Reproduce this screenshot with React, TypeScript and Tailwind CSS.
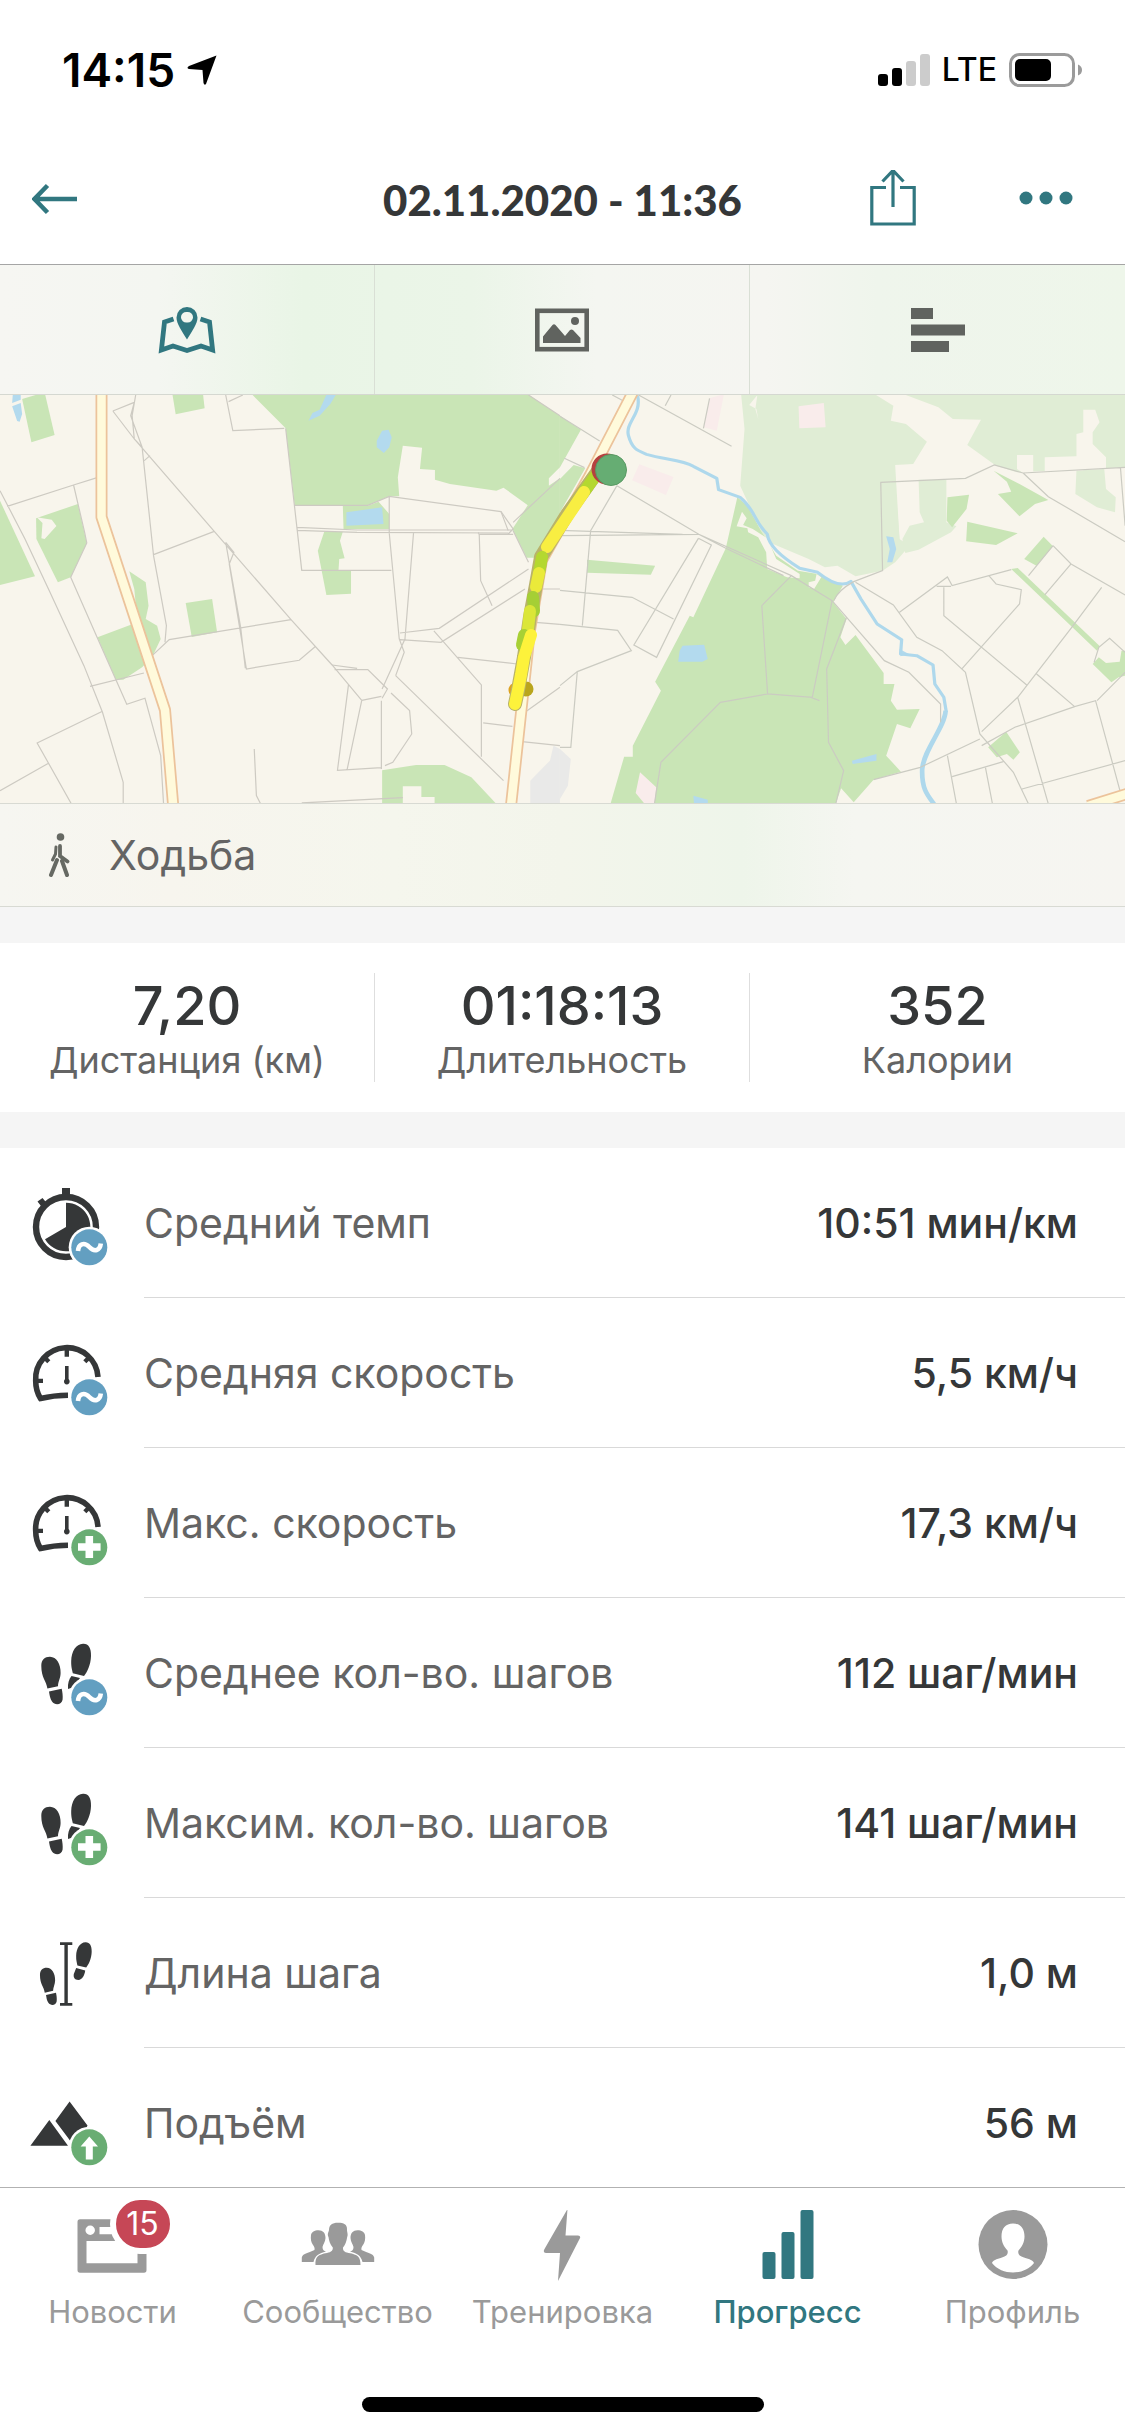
import type { ReactNode } from "react";

type BadgeKind = "average" | "max" | "ascent";

function Badge({ kind }: { kind: BadgeKind }) {
    return (
        <g>
            <circle cx="59.3" cy="74.3" r="20.6" fill="#fff" />
            <circle cx="59.3" cy="74.3" r="18" fill={kind === "average" ? "#639fc1" : "#69ad73"} />
            {kind === "average" && (
                <path
                    d="M48 78C48.5 71 54 68.5 59.3 74C64.5 79.5 70 77.5 70.8 70.5"
                    fill="none"
                    stroke="#fff"
                    strokeWidth="4.6"
                />
            )}
            {kind === "max" && <path d="M55.5 63h7.6v7.2h7.5v7.6h-7.5v7.2h-7.6v-7.2H48v-7.6h7.5z" fill="#fff" />}
            {kind === "ascent" && <path d="M59.3 63.5L68 73.6H62.8V86.6H55.8V73.6H50.6z" fill="#fff" />}
        </g>
    );
}

function RowIcon({ children }: { children: ReactNode }) {
    return (
        <svg viewBox="0 0 84 100" className="h-[100px] w-[84px] shrink-0" fill="#353738" aria-hidden="true">
            {children}
        </svg>
    );
}

function Stopwatch() {
    return (
        <>
            <circle cx="36" cy="54" r="30" fill="none" stroke="#353738" strokeWidth="6.4" />
            <path d="M32 15h8v8h-8zM7.5 28.5l5-3.5 5 6-5 4z" />
            <path d="M36 54V29.7A24.3 24.3 0 1 1 15 66.2z" />
        </>
    );
}

function Gauge() {
    return (
        <g fill="none" stroke="#353738">
            <path d="M38 72.2C28 72.3 19 73.4 10.5 75.4C6.8 69.5 5.7 63.5 5.7 57.7A31.2 31.2 0 0 1 68 54" strokeWidth="5.6" />
            <path d="M8 57.9H13M36.8 26V33.8M14.5 34.5L18.8 38.8M59.2 34.5L54.8 38.8" strokeWidth="4.4" />
            <path d="M36.8 43V58" strokeWidth="3.6" />
            <circle cx="36.8" cy="58.6" r="2.8" fill="#353738" stroke="none" />
        </g>
    );
}

const LEFT_SHOE =
    "M11.3 43C11.3 36.5 15 33.7 20 33.8C26.5 34 30.8 41 30.6 50C30.5 55.5 28.2 58 28 63.2L17.4 65.6C16.5 58 11.3 55 11.3 43ZM19 68.4L31.7 65.8C32.4 69 33 73 32.6 76.5C32 81.8 25 82.8 22 78.5C20 75.5 19.6 72 19 68.4Z";
const RIGHT_SOLE =
    "M53 20.7C58.5 20.4 61.2 25 61 33C60.8 42 57 49.5 54 53L42.8 50.3C42.2 47 41 44 41.2 38C41.5 28 46 21.2 53 20.7Z";

function Steps() {
    return (
        <>
            <path d={LEFT_SHOE} />
            <path d={RIGHT_SOLE} />
            <path d="M41.5 53L50 55L44 64L38 66C37.6 60.5 39 56 41.5 53Z" />
        </>
    );
}

function StepLength() {
    return (
        <>
            <path d={LEFT_SHOE} transform="translate(1.1 18.2) scale(.785)" />
            <path d={RIGHT_SOLE} transform="translate(13.8 2.9) scale(.785)" />
            <path d="M46.2 45L55.2 47.6C54.6 52.5 52 57 48.4 57C44.5 57 43.2 54 43.8 51Z" />
            <path d="M30 19.3H42.3V22H37.8V80H42.3V82.7H30V80H34.4V22H30Z" />
        </>
    );
}

function Mountains() {
    return <path d="M.4 72.8L19.3 47L38 72.8ZM39.6 28.4L57.5 52.4L48 72L43 71.5L25.4 48Z" />;
}

const metrics: { label: string; value: string; icon: ReactNode; badge?: BadgeKind }[] = [
    { label: "Средний темп", value: "10:51 мин/км", icon: <Stopwatch />, badge: "average" },
    { label: "Средняя скорость", value: "5,5 км/ч", icon: <Gauge />, badge: "average" },
    { label: "Макс. скорость", value: "17,3 км/ч", icon: <Gauge />, badge: "max" },
    { label: "Среднее кол-во. шагов", value: "112 шаг/мин", icon: <Steps />, badge: "average" },
    { label: "Максим. кол-во. шагов", value: "141 шаг/мин", icon: <Steps />, badge: "max" },
    { label: "Длина шага", value: "1,0 м", icon: <StepLength /> },
    { label: "Подъём", value: "56 м", icon: <Mountains />, badge: "ascent" },
];

const summary = [
    { value: "7,20", label: "Дистанция (км)" },
    { value: "01:18:13", label: "Длительность" },
    { value: "352", label: "Калории" },
];

function StatusBar() {
    return (
        <div className="flex h-[136px] items-center justify-between pt-1 pl-[62px] pr-[42px] text-black">
            <div className="flex items-center gap-3">
                <span className="text-[46px] leading-[52px] font-semibold">14:15</span>
                <svg viewBox="0 0 30 30" className="h-[30px] w-[30px]" aria-hidden="true">
                    <path d="M29.5 .5L19 29Q17.5 31 16.5 28L15.5 15L2 14Q-1 13 2 11Z" />
                </svg>
            </div>
            <div className="flex items-center gap-3">
                <svg viewBox="0 0 52 32" className="h-8 w-[52px]" aria-hidden="true">
                    <rect x="0" y="20" width="10" height="12" rx="3" />
                    <rect x="14" y="14" width="10" height="18" rx="3" />
                    <rect x="28" y="7" width="10" height="25" rx="3" fill="#ccc" />
                    <rect x="42" y="0" width="10" height="32" rx="3" fill="#ccc" />
                </svg>
                <span className="text-[32px] leading-10 font-medium">LTE</span>
                <svg viewBox="0 0 74 34" className="h-[34px] w-[74px]" aria-hidden="true">
                    <rect x="1.5" y="1.5" width="63" height="31" rx="9" fill="none" stroke="#9b9b9b" strokeWidth="3" />
                    <rect x="6" y="6" width="36" height="22" rx="5" />
                    <path d="M69 11.5Q73 13 73 17T69 22.5Z" fill="#9b9b9b" />
                </svg>
            </div>
        </div>
    );
}

function Header() {
    return (
        <header className="grid h-[129px] grid-cols-[1fr_auto_1fr] items-center border-b border-[#a5a5a5] px-8 text-[#317780]">
            <button type="button" aria-label="Назад" className="h-12 w-12 justify-self-start">
                <svg viewBox="0 0 48 48" className="h-12 w-12" fill="none" stroke="currentColor" strokeWidth="4.5">
                    <path d="M45 23H3M15.5 9.5L2.5 23L15.5 36.5" />
                </svg>
            </button>
            <h1 className="font-['Lato','Inter',sans-serif] text-[42px] leading-[52px] font-black text-[#353738]">
                02.11.2020 - 11:36
            </h1>
            <div className="flex items-center justify-end gap-[102px] pr-5">
                <button type="button" aria-label="Поделиться" className="h-[60px] w-12">
                    <svg viewBox="0 0 48 60" className="h-[60px] w-12" fill="none" stroke="currentColor" strokeWidth="3.2">
                        <path d="M17 17.5H2.8V54H45.2V17.5H31M24 37V1M13.5 11.5L24 .5L34.5 11.5" />
                    </svg>
                </button>
                <button type="button" aria-label="Ещё" className="h-12 w-[54px]">
                    <svg viewBox="0 0 54 48" className="h-12 w-[54px]" fill="currentColor">
                        <circle cx="7" cy="22" r="6.5" />
                        <circle cx="27" cy="22" r="6.5" />
                        <circle cx="47" cy="22" r="6.5" />
                    </svg>
                </button>
            </div>
        </header>
    );
}

function ViewSwitch() {
    return (
        <div className="grid h-[130px] shrink-0 grid-cols-3 divide-x divide-[#d9dfd5] border-b border-[#d5d8d1] bg-[linear-gradient(90deg,#f6f6f2_0%,#f4f6f1_14%,#e9f5e6_27%,#ebf5e8_42%,#f4f6f1_53%,#f5f5f1_68%,#eff5ec_78%,#eef6ea_100%)]">
            <button type="button" aria-label="Карта" className="flex items-center justify-center">
                <svg viewBox="0 0 60 50" className="h-[50px] w-[60px]" fill="none" stroke="#317780" strokeWidth="4.8">
                    <path d="M16.5 14L7.5 17L4.4 45L16 41L30 45.5L44 41L55.6 45L52.5 17L43.5 14" />
                    <path
                        d="M30 34.5C25 26 19.5 19 19.5 12.5A10.5 10.5 0 0 1 40.5 12.5C40.5 19 35 26 30 34.5ZM30 17.5A5.3 5.3 0 1 0 30 7A5.3 5.3 0 1 0 30 17.5Z"
                        fill="#317780"
                        fillRule="evenodd"
                        stroke="none"
                    />
                </svg>
            </button>
            <button type="button" aria-label="Фото" className="flex items-center justify-center">
                <svg viewBox="0 0 54 44" className="h-11 w-[54px]" fill="#60635f">
                    <rect x="2.3" y="2.8" width="49.4" height="38.4" fill="none" stroke="#60635f" strokeWidth="4.6" />
                    <path d="M8 35V28.5L17.5 17Q19 15.5 20.5 17L30 28L35 22Q36.5 20.8 38 22L45.5 30V35Z" />
                    <circle cx="40" cy="13" r="4" />
                </svg>
            </button>
            <button type="button" aria-label="Статистика" className="flex items-center justify-center">
                <svg viewBox="0 0 54 44" className="h-11 w-[54px]" fill="#60635f">
                    <path d="M0 0H22V11H0ZM0 16.5H54V27.5H0ZM0 33H38V44H0Z" />
                </svg>
            </button>
        </div>
    );
}

function RouteMap() {
    return (
        <svg
            viewBox="0 0 1125 408"
            preserveAspectRatio="xMidYMid slice"
            className="h-[408px] w-full shrink-0 bg-[#f8f5ec]"
            role="img"
            aria-label="Маршрут тренировки"
        >
            {/* west sheet */}
            <g transform="scale(.3571 .3333) translate(0 -18)">
                <g fill="#c9e5b6">
                    <path d="M62 30L125 10L153 138L88 160Z" />
                    <path d="M482 10H568L573 58L492 76Z" />
                    <path d="M700 10H1470L1568 80V270L1480 350L1410 296L1390 305L1260 285L1218 272V243L1176 240L1182 176L1128 170L1114 265L1118 322L1090 322L1030 349H825L800 118Z" />
                    <path d="M0 335L98 562L0 588Z" />
                    <path d="M101 388L218 345L243 462L198 565L162 580L102 450Z" />
                    <path d="M362 547L408 580L416 650L408 690L440 710L450 750L428 800L398 835L345 872L325 873L273 745L385 700L376 600Z" />
                    <path d="M520 642L594 630L608 730L537 744Z" />
                    <path d="M960 350H1030L1060 338L1090 375V420H962ZM908 428H960L952 455L965 508L950 510L948 543H983V614L914 618L890 485Z" />
                    <path d="M1568 268L1480 345L1435 420L1475 506H1500L1568 380Z" />
                    <path d="M1070 1144L1165 1128H1245L1320 1165L1390 1245H1070Z" />
                </g>
                <path
                    d="M103 385L145 392L158 411L125 450L116 448L119 402ZM1070 333L1090 325V375ZM1568 235L1537 268V290L1568 268ZM1128 1192H1180V1224H1217V1245H1128Z"
                    fill="#f8f5ec"
                />
                <path
                    d="M36 15H58V32L34 42ZM34 52L58 42L62 75L55 98L48 96ZM915 15H942L925 45L895 80L864 95L875 72L895 62ZM1070 125L1088 122L1097 145L1090 175L1075 192L1055 175V155ZM970 370L1070 355L1074 405L970 410Z"
                    fill="#b3daee"
                />
                <path d="M1550 1070L1568 1080V1245H1485V1175L1540 1115Z" fill="#e9e9e8" />
                <g fill="none" stroke="#cdcac2" strokeWidth="1.2">
                    <path
                        vectorEffect="non-scaling-stroke"
                        d="M0 305L70 450L140 610L235 830L287 970L345 1180V1245M20 352L206 288L272 266M206 288L237 430L243 462L198 565L270 740L355 946L406 928L450 1100L458 1245M252 892L403 852M287 967L104 1062L200 1245M0 1205L137 1122"
                    />
                    <path
                        vectorEffect="non-scaling-stroke"
                        d="M380 18L370 80L376 150L398 175L402 215L430 500L466 710L462 760M430 497L600 427M316 66L376 40L366 80L398 175M316 66L376 150L600 427L815 692L930 828L1013 934M404 215L420 200M632 18L652 125L796 118M640 38L680 18M632 460L655 490L642 525L690 840L838 814L884 772M632 460L674 716L687 838M420 806L474 752L815 692"
                    />
                    <path
                        vectorEffect="non-scaling-stroke"
                        d="M800 118L845 544H1096M825 349H1030L1090 322L1403 368L1437 420L1423 435M832 415L1000 423H1438M832 424L1000 430L1423 432M1090 322V432L1118 750L1132 790L1108 860M1158 432L1134 750L1070 900M1340 436V430M1437 436H1342L1346 575L1378 650M1480 540L1230 718L1120 732M1470 600L1235 760L1120 752M1215 726L1348 888V1103M1282 805L1448 825"
                    />
                    <path
                        vectorEffect="non-scaling-stroke"
                        d="M1108 860L1410 1175M1068 935V1140M930 828L1000 838M937 842H1030L1085 900L1070 928M1013 934L1068 922M1095 912L1147 965L1153 1035L1100 1120L1078 1130M1013 934L972 1142M976 886L945 1144L1068 1136M1353 1002L1435 1012M1462 1058L1568 1070M1470 970L1568 895M712 1080L718 1220L730 1245M845 1242L1128 1226M1505 600H1568M1500 700L1568 706M1480 18L1568 80M1437 400L1568 268M1437 425L1480 520M1403 368L1423 425"
                    />
                </g>
            </g>

            {/* east sheet */}
            <g transform="translate(560 0) scale(.3604 .3333) translate(0 -18)">
                <g fill="#e0edd5">
                    <path d="M502 10H865L925 50L918 95L960 105L1018 158L980 225L930 228L942 450L970 470L930 520L895 545L820 562L770 530L735 535L690 510L570 455L500 290L512 120Z" />
                    <path d="M940 10H1568V235L1268 250L1210 230L1130 168L1168 92L1090 90L1050 55Z" />
                    <path d="M995 272H1072V400L1100 412L1085 430L995 482L958 492L950 450L970 410L1010 400L998 370ZM1433 245L1510 238L1515 300L1542 325L1540 370L1490 355L1430 315Z" />
                    <path d="M890 280H930L942 450L895 545Z" />
                </g>
                <path
                    d="M1345 205L1433 202V135L1452 130V62H1485L1497 100L1478 130V165L1515 205V240L1345 250ZM1268 198H1313V252H1285L1268 240ZM550 15L525 48L545 60L550 90L542 60L548 15Z"
                    fill="#f8f5ec"
                />
                <g fill="#c9e5b6">
                    <path d="M0 80L58 122L0 235ZM0 270L38 228L70 238L0 370Z" />
                    <path d="M75 512L264 530L252 557L75 551Z" />
                    <path d="M492 325L520 350L560 430L600 500L660 545L715 555L785 590L758 640L795 690L778 745L792 768L820 738L898 852V885H928L918 935L935 962L998 960L972 1018L935 1005L905 1100L946 1148L870 1172L815 1240L780 1198L765 1245H140L178 1103H202V1070L280 905L264 878L360 680L370 685L460 478Z" />
                    <path d="M1075 325L1135 317L1128 360L1088 415L1073 395ZM1130 398L1270 433L1210 468L1127 457ZM1203 245L1275 285L1355 333L1318 345L1275 382L1215 315L1252 308L1240 278ZM1342 443L1368 472L1322 530L1288 510ZM1252 540L1270 537L1498 772L1490 785ZM1478 825L1495 805L1515 822L1553 818L1558 785H1568V860L1550 865L1530 880ZM1238 1028L1276 1090L1258 1112L1240 1095L1212 1105L1188 1075Z" />
                </g>
                <path
                    d="M505 368L518 388L508 408L535 420L575 448L600 510L665 555V568L630 565L575 540L572 490L550 445L522 430L520 418L490 412ZM690 580L708 575L712 555L725 565L705 600L690 595Z"
                    fill="#f8f5ec"
                />
                <path
                    d="M662 52L732 42L737 115L664 118ZM415 28L455 15L435 125L398 115ZM220 226L315 264L294 318L200 274ZM222 1150L267 1195L262 1245H235L210 1212Z"
                    fill="#f9eceb"
                />
                <path
                    d="M340 770L400 767L410 810L395 818H328L332 785ZM905 442L925 445L933 480L922 520H908L915 480ZM810 1115L878 1095V1115L812 1125ZM370 1220L410 1232V1245H372ZM942 780L968 795L945 802Z"
                    fill="#b3daee"
                />
                <path d="M0 1080L30 1110L22 1190L0 1230Z" fill="#e9e9e8" />
                <g fill="none" stroke="#aed8ec" strokeLinejoin="round">
                    <path
                        d="M215 20C228 75 180 100 190 140C200 180 215 185 240 196C290 212 340 212 370 232L435 268L440 302L500 325C540 360 540 400 575 435C580 470 610 500 665 538L715 550C750 580 785 595 807 577L835 630L880 705L948 752L945 795L990 800L1035 828L1040 885L1065 925L1072 970"
                        strokeWidth="9"
                    />
                    <path d="M1070 965C1068 1015 1010 1080 1005 1140C1003 1200 1020 1220 1038 1245" strokeWidth="13" />
                </g>
                <g fill="none" stroke="#cbcbc2" strokeWidth="1.2">
                    <path
                        vectorEffect="non-scaling-stroke"
                        d="M218 18L476 172M145 18L175 35M308 18L292 50M415 28L398 118M0 82L110 156M12 208L68 236M158 290L385 436L642 560L755 635L900 815L968 850L1056 945V1000M158 290L85 425L62 710M0 424L340 436M0 440L385 436L460 478L620 560M384 448L420 468L268 805L205 768L384 448M0 604L200 625L315 690M0 706L160 724L198 785L48 848L0 890M48 848L30 1075H0"
                    />
                    <path
                        vectorEffect="non-scaling-stroke"
                        d="M642 560L560 650L576 915L700 925L755 635M576 915L445 940L280 1120L262 1245M795 685L740 840L745 1060L787 1145L765 1245M695 925L720 935"
                    />
                    <path
                        vectorEffect="non-scaling-stroke"
                        d="M760 635Q770 605 815 578L895 545L890 280L1125 268L1205 228L1285 252L1568 235M1285 252L1355 323L1568 458M820 580L925 648L990 745L1060 785L1125 850L1165 1035L1258 1150L1300 1245M942 670L1075 564L1088 590L1252 542M1045 592H1085M1065 595V680L1295 888M1190 560L1210 585L1280 602L1275 645L1115 840M1368 470L1300 560M1368 470L1418 525L1568 618M1418 525L1345 618M1503 595L1420 715L1270 925L1170 1028M1270 925L1355 1245M1320 853L1428 953L1486 935L1555 1210M1490 935L1568 850M1428 953L1262 1015L1170 1070M1000 1135L1165 1050M870 1172L1000 1135M1075 1100L1100 1245M1088 1163L1230 1118M1180 1133L1200 1245M1282 1200L1568 1115M1482 820L1495 775L1525 748L1568 790M1555 235L1568 410"
                    />
                </g>
            </g>

            {/* main roads */}
            <g fill="none" strokeLinejoin="round">
                <g stroke="#ecc39b" strokeWidth="12">
                    <path d="M101.5 -5V122L165 315L174 420" />
                    <path d="M634 -5L590 80L542 165L530 235L510 420" />
                    <path d="M1088 411L1130 398" />
                </g>
                <g stroke="#fffadb" strokeWidth="8.5">
                    <path d="M101.5 -5V122L165 315L174 420" />
                    <path d="M634 -5L590 80L542 165L530 235L510 420" />
                    <path d="M1088 411L1130 398" />
                </g>
            </g>

            {/* recorded track, coloured by speed */}
            <circle cx="516" cy="295" r="7.5" fill="#dda21f" />
            <circle cx="526" cy="294" r="7.5" fill="#b9a51d" />
            <g fill="none" strokeLinecap="round" strokeLinejoin="round" strokeWidth="12">
                <path d="M598 76L568 118L541 162L536 190L530 222L524 262L518 295L515 309" stroke="#b9b36a" strokeWidth="14" />
                <path d="M596 80L584 97" stroke="#b4d830" />
                <path d="M584 97L570 118L547 152" stroke="#f8ee42" />
                <path d="M542 162L539 178" stroke="#b4d830" />
                <path d="M539 178L536 192" stroke="#eaea3a" />
                <path d="M533 202L534 216" stroke="#a5cf35" />
                <path d="M530 216L528 234" stroke="#dbe638" />
                <path d="M524 240L522 250" stroke="#a8d035" />
                <path d="M531 240L524 262L521 280L518 295L515 309" stroke="#fdf23b" />
            </g>
            <circle cx="607" cy="74" r="15.5" fill="#b5413f" />
            <circle cx="611" cy="75" r="15.5" fill="#66ad73" stroke="#5a9a64" />
        </svg>
    );
}

function ActivityBar() {
    return (
        <div className="flex h-[104px] shrink-0 items-center gap-[39px] border-y border-[#d8dad3] bg-[linear-gradient(90deg,#f6f6f1_0%,#f7f5ee_15%,#f5f6ed_35%,#f3f5eb_50%,#eef5ea_66%,#f5f6f1_76%,#f6f5f1_100%)] pl-12 text-[#646464]">
            <svg viewBox="0 0 22 44" className="h-11 w-[22px]" fill="none" stroke="#666963" strokeLinecap="round" aria-hidden="true">
                <circle cx="12.5" cy="4" r="3.8" fill="#666963" stroke="none" />
                <path d="M12 13V23L19.5 28.5" strokeWidth="3.8" />
                <path d="M8 14L7.5 21L4.500 27" strokeWidth="3" />
                <path d="M9 27L3 42M14 28L19 42" strokeWidth="4" />
            </svg>
            <span className="text-[41px] leading-[52px]">Ходьба</span>
        </div>
    );
}

function TabIcon({ children }: { children: ReactNode }) {
    return (
        <svg viewBox="0 0 90 72" className="h-[72px] w-[90px]" fill="currentColor" aria-hidden="true">
            {children}
        </svg>
    );
}

const SIDE_PERSON =
    "M8.8 52V47.5C9.5 43.5 15 43 21.5 40C22 37.5 21 36.5 20 35C18 32 17.5 29 18 25C18.5 22 21.5 20.3 25.5 20.3C30 20.5 32.5 23 32.5 28C32.3 32 30 34.5 29.5 37C29.5 40 31 41 33 41.5C26 43.5 22 45.5 20.5 52Z";

const tabs = [
    {
        label: "Новости",
        count: 15,
        icon: (
            <path
                d="M12 9.3H76Q78.5 9.3 78.5 12V60Q78.5 62.7 76 62.7H12Q9.5 62.7 9.5 60V12Q9.5 9.3 12 9.3ZM18.5 31V53.2H69.5V31ZM22.2 15.5A4.7 4.7 0 1 0 22.2 25A4.7 4.7 0 1 0 22.2 15.5ZM31.5 17V24.3H60V17Z"
                fillRule="evenodd"
            />
        ),
    },
    {
        label: "Сообщество",
        icon: (
            <>
                <path d={SIDE_PERSON} />
                <path d={SIDE_PERSON} transform="matrix(-1 0 0 1 90 0)" />
                <path d="M22.5 55C22 47 25 44.5 34 43C38.5 42 40 40.5 39.8 37.5C37 34 36 31 35.5 27C34 24 35.5 22.5 36 20C36 15 39 12.7 45 12.7C51 12.7 54 14.5 54 19C53.7 22 55.5 24 54.2 27C53.5 31 52.5 34.5 50 37.5C49.8 40.5 51 42 55.5 43C65 44.5 67.5 47 67.5 55Z" />
            </>
        ),
    },
    {
        label: "Тренировка",
        icon: <path d="M49.5 -1L47.5 25.5H60Q63.5 26 61.5 29L40 71L42 43H28Q24.5 42.5 26.5 39Z" />,
    },
    {
        label: "Прогресс",
        active: true,
        icon: (
            <>
                <rect x="19.5" y="42" width="13" height="27" rx="2" />
                <rect x="38.5" y="22" width="13" height="47" rx="2" />
                <rect x="57.5" y="0" width="13" height="69" rx="2" />
            </>
        ),
    },
    {
        label: "Профиль",
        icon: (
            <>
                <circle cx="45" cy="34.5" r="34.5" />
                <path
                    d="M45 13.5C52.5 13.5 56.5 18.5 56.5 26.5C56.5 32 54 37 50.5 40.5C49.5 44 51.5 46 56 47.5C62 49.5 65 50 66 53C61 59.5 53 62.5 45 62.5S29 59.5 24 53C25 50 28 49.5 34 47.5C38.5 46 40.5 44 39.5 40.5C36 37 33.5 32 33.5 26.5C33.5 18.5 37.5 13.5 45 13.5Z"
                    fill="#fff"
                />
            </>
        ),
    },
];

function TabBar() {
    return (
        <nav className="shrink-0 border-t border-[#b2b2b2] bg-white">
            <div className="grid grid-cols-5 pt-[22px]">
                {tabs.map((tab) => (
                    <a
                        key={tab.label}
                        href="#"
                        className={
                            tab.active
                                ? "flex flex-col items-center gap-3 font-medium text-[#317780]"
                                : "flex flex-col items-center gap-3 text-[#9a9a9a]"
                        }
                    >
                        <span className="relative">
                            <TabIcon>{tab.icon}</TabIcon>
                            {tab.count && (
                                <span className="absolute -top-4 left-[42px] flex h-[60px] w-[66px] items-center justify-center rounded-full border-6 border-white bg-[#c64756] text-[32px] leading-9 text-white">
                                    {tab.count}
                                </span>
                            )}
                        </span>
                        <span className="text-[31px] leading-9">{tab.label}</span>
                    </a>
                ))}
            </div>
            <div className="flex justify-center pt-[67px] pb-6">
                <div className="h-[15px] w-[402px] rounded-full bg-black" />
            </div>
        </nav>
    );
}

export default function App() {
    return (
        <div className="flex h-screen flex-col bg-white font-['Inter','Noto_Sans',sans-serif]">
            <StatusBar />
            <Header />
            <main className="flex min-h-0 flex-1 flex-col overflow-hidden bg-[#f5f5f5]">
                <ViewSwitch />
                <RouteMap />
                <ActivityBar />
                <section className="my-9 grid shrink-0 grid-cols-3 divide-x divide-[#dedede] bg-white py-[30px]">
                    {summary.map((item) => (
                        <div key={item.label} className="flex h-[109px] flex-col items-center justify-center pt-1">
                            <span className="text-[54px] leading-[60px] font-medium text-[#353738]">{item.value}</span>
                            <span className="text-[36px] leading-[48px] text-[#646464]">{item.label}</span>
                        </div>
                    ))}
                </section>
                <ul className="bg-white">
                    {metrics.map((metric) => (
                        <li key={metric.label} className="flex h-[150px] items-center gap-[30px] pl-[30px]">
                            <RowIcon>
                                {metric.icon}
                                {metric.badge && <Badge kind={metric.badge} />}
                            </RowIcon>
                            <div className="flex h-full flex-1 items-center justify-between border-b border-[#d9d9d9] pr-[47px] text-[41px] leading-[52px]">
                                <span className="text-[#646464]">{metric.label}</span>
                                <span className="font-medium text-[#353738]">{metric.value}</span>
                            </div>
                        </li>
                    ))}
                </ul>
            </main>
            <TabBar />
        </div>
    );
}
